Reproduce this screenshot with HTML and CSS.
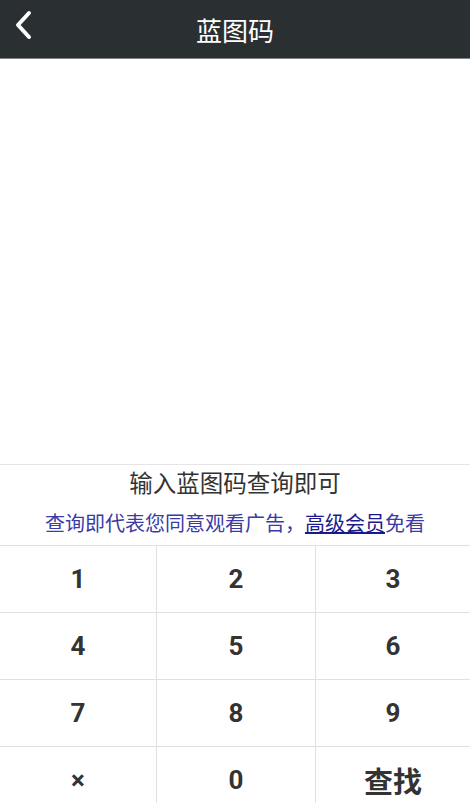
FILE: index.html
```html
<!DOCTYPE html>
<html lang="zh">
<head>
    <meta charset="UTF-8">
    <meta name="viewport" content="width=device-width, initial-scale=1.0">
    <title>蓝图码</title>
    <link rel="stylesheet" href="styles.css">
</head>
<body>
    <div class="page">
        <!-- 顶部标题栏 -->
        <div class="header">
            <span class="back">
                <svg width="22" height="30" viewBox="0 0 22 30">
                    <path d="M17 3 L6 15 L17 27" fill="none" stroke="#fff" stroke-width="4" stroke-linecap="round" stroke-linejoin="round"/>
                </svg>
            </span>
            <h1>蓝图码</h1>
        </div>

        <!-- 输入显示区 -->
        <div class="display"></div>

        <div class="info">
            <div class="hint">输入蓝图码查询即可</div>
            <div class="notice">查询即代表您同意观看广告，<a href="#">高级会员</a>免看</div>
        </div>

        <!-- 数字键盘 -->
        <div class="keypad">
            <div class="key">1</div>
            <div class="key">2</div>
            <div class="key">3</div>
            <div class="key">4</div>
            <div class="key">5</div>
            <div class="key">6</div>
            <div class="key">7</div>
            <div class="key">8</div>
            <div class="key">9</div>
            <div class="key">×</div>
            <div class="key">0</div>
            <div class="key search">查找</div>
        </div>
    </div>
</body>
</html>
```

FILE: styles.css
```css
body {
    margin: 0;
    font-family: Roboto, "Noto Sans CJK SC", sans-serif;
    background-color: #fff;
}

.page {
    height: 803px;
    overflow: hidden;
    display: flex;
    flex-direction: column;
}

.header {
    height: 58px;
    flex-shrink: 0;
    background-color: #2a2f32;
    border-bottom: 1px solid #7d8386;
    display: flex;
    align-items: center;
    justify-content: center;
    position: relative;
}

.header h1 {
    margin: 0;
    color: #fff;
    font-size: 26px;
    font-weight: normal;
}

.back {
    position: absolute;
    left: 12px;
    top: 10px;
    width: 22px;
    height: 30px;
}

.display {
    height: 405px;
    flex-shrink: 0;
}

.info {
    flex-shrink: 0;
    border-top: 1px solid #e6e6e6;
    text-align: center;
}

.hint {
    height: 38px;
    line-height: 38px;
    font-size: 23.5px;
    color: #333;
}

.notice {
    height: 42px;
    line-height: 42px;
    font-size: 20px;
    color: #3b3ba6;
}

.notice a {
    color: #1a1a8c;
    text-decoration: underline;
}

.keypad {
    flex-shrink: 0;
    border-top: 1px solid #e0e0e0;
    display: grid;
    grid-template-columns: 157px 159px 154px;
}

.key {
    height: 66px;
    border-bottom: 1px solid #e0e0e0;
    border-right: 1px solid #e0e0e0;
    display: flex;
    align-items: center;
    justify-content: center;
    font-size: 26px;
    font-weight: bold;
    color: #333;
}

.key:nth-child(3n) {
    border-right: none;
}

.key.search {
    font-size: 29px;
}
```
